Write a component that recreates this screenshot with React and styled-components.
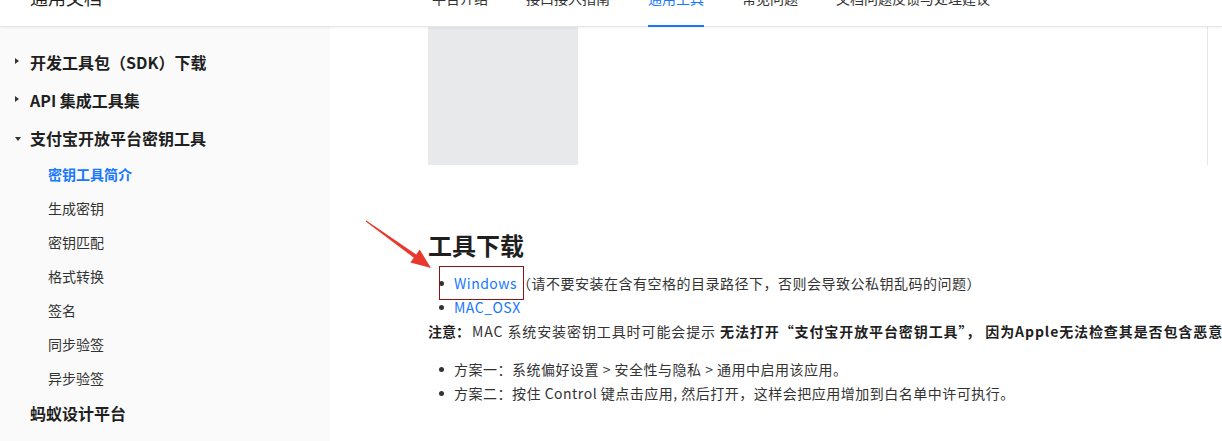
import React from 'react';
import styled, { createGlobalStyle } from 'styled-components';

const GlobalStyle = createGlobalStyle`
  html, body {
    margin: 0;
    padding: 0;
    overflow: hidden;
    background: #ffffff;
  }
  body {
    font-family: "Noto Sans CJK SC", "Noto Sans", sans-serif;
    color: #333333;
  }
`;

const navItems = ['平台介绍', '接口接入指南', '通用工具', '常见问题', '文档问题反馈与处理建议'];

const sideGroups = [
  { title: '开发工具包（SDK）下载', open: false },
  { title: 'API 集成工具集', open: false },
  {
    title: '支付宝开放平台密钥工具',
    open: true,
    children: ['密钥工具简介', '生成密钥', '密钥匹配', '格式转换', '签名', '同步验签', '异步验签'],
    active: '密钥工具简介',
  },
];

const App = () => {
  return (
    <Page>
      <GlobalStyle />
      <Header>
        <Logo>通用文档</Logo>
        <Nav>
          {navItems.map((item) => (
            <NavItem key={item} $active={item === '通用工具'}>
              {item}
            </NavItem>
          ))}
        </Nav>
      </Header>

      <Body>
        <Sidebar>
          {sideGroups.map((group) => (
            <div key={group.title}>
              <GroupTitle>
                <Caret $open={group.open} />
                {group.title}
              </GroupTitle>
              {group.open && (
                <SubList>
                  {group.children.map((child) => (
                    <SubItem key={child} $active={child === group.active}>
                      {child}
                    </SubItem>
                  ))}
                </SubList>
              )}
            </div>
          ))}
          <GroupTitle $plain>蚂蚁设计平台</GroupTitle>
        </Sidebar>

        <Main>
          <ImageRow>
            <Placeholder />
            <FrameEdge />
          </ImageRow>

          <Heading>工具下载</Heading>

          <List>
            <ListItem>
              <Bullet />
              <MarkedLink>Windows</MarkedLink>
              <span>（请不要安装在含有空格的目录路径下，否则会导致公私钥乱码的问题）</span>
            </ListItem>
            <ListItem>
              <Bullet />
              <Link>MAC_OSX</Link>
            </ListItem>
          </List>

          <Note>
            <Lead>注意：</Lead>MAC 系统安装密钥工具时可能会提示{' '}
            <strong>无法打开“支付宝开放平台密钥工具”， 因为Apple无法检查其是否包含恶意软件。</strong>
          </Note>

          <List $spaced>
            <ListItem>
              <Bullet />
              <span>方案一：系统偏好设置 &gt; 安全性与隐私 &gt; 通用中启用该应用。</span>
            </ListItem>
            <ListItem>
              <Bullet />
              <span>方案二：按住 Control 键点击应用, 然后打开，这样会把应用增加到白名单中许可执行。</span>
            </ListItem>
          </List>
        </Main>
      </Body>

      <Arrow width="80" height="60" viewBox="0 0 80 60">
        <polygon
          points="5.7,6.4 53.8,42.7 50.3,47.6 71,53 59.7,34.6 56.2,39.5 6.3,5.6"
          fill="#e8392e"
        />
      </Arrow>
    </Page>
  );
};

export default App;

const Page = styled.div`
  position: relative;
  height: 100vh;
  overflow: hidden;
`;

const Header = styled.header`
  position: relative;
  z-index: 2;
  display: flex;
  align-items: center;
  height: 60px;
  margin-top: -33px;
  background: #ffffff;
  border-bottom: 1px solid #e6e6e6;
  box-shadow: 0 1px 3px rgba(0, 0, 0, 0.06);
  box-sizing: border-box;
`;

const Logo = styled.div`
  width: 402px;
  padding-left: 30px;
  box-sizing: border-box;
  font-size: 18px;
  line-height: 24px;
  color: #1f1f1f;
`;

const Nav = styled.nav`
  display: flex;
  align-items: stretch;
  gap: 38px;
  height: 100%;
  margin-left: 30px;
`;

const NavItem = styled.div`
  display: flex;
  align-items: center;
  padding-top: 3px;
  font-size: 14px;
  color: ${(p) => (p.$active ? '#1677ff' : '#333333')};
  border-bottom: 2px solid ${(p) => (p.$active ? '#1677ff' : 'transparent')};
  margin-bottom: -1px;
  box-sizing: border-box;
`;

const Body = styled.div`
  display: flex;
  height: calc(100vh - 27px);
`;

const Sidebar = styled.aside`
  flex: 0 0 330px;
  padding-top: 16px;
  background: #fafafa;
  box-sizing: border-box;
`;

const GroupTitle = styled.div`
  position: relative;
  display: flex;
  align-items: center;
  height: 38px;
  padding-left: 30px;
  font-size: 16px;
  font-weight: 700;
  color: #1f1f1f;
  margin-top: ${(p) => (p.$plain ? '-1px' : '0')};
`;

const Caret = styled.span`
  position: absolute;
  left: 15px;
  top: 50%;
  width: 0;
  height: 0;
  ${(p) =>
    p.$open
      ? `
    margin-top: -1px;
    border-left: 3.5px solid transparent;
    border-right: 3.5px solid transparent;
    border-top: 4px solid #333;
  `
      : `
    margin-top: -4px;
    border-top: 3.5px solid transparent;
    border-bottom: 3.5px solid transparent;
    border-left: 4px solid #333;
  `}
`;

const SubList = styled.div`
  display: flex;
  flex-direction: column;
`;

const SubItem = styled.div`
  display: flex;
  align-items: center;
  height: 34px;
  padding-left: 48px;
  font-size: 14px;
  font-weight: ${(p) => (p.$active ? 700 : 400)};
  color: ${(p) => (p.$active ? '#1677ff' : '#333333')};
`;

const Main = styled.main`
  flex: 1;
  min-width: 0;
  padding-left: 98px;
  overflow: hidden;
  font-size: 14px;
  letter-spacing: 0.5px;
  color: #333333;
`;

const ImageRow = styled.div`
  display: flex;
  height: 138px;
`;

const Placeholder = styled.div`
  flex: 0 0 150px;
  height: 100%;
  background: #e8e9eb;
`;

const FrameEdge = styled.div`
  flex: 0 0 40px;
  margin-left: 629px;
  height: 100%;
  border-left: 1px solid #e6e6e6;
`;

const Heading = styled.h2`
  margin: 62px 0 0;
  font-size: 24px;
  line-height: 36px;
  font-weight: 700;
  letter-spacing: 0;
  color: #1f1f1f;
`;

const List = styled.ul`
  margin: ${(p) => (p.$spaced ? '14px' : '8px')} 0 0;
  padding: 0;
  list-style: none;
`;

const ListItem = styled.li`
  display: flex;
  align-items: center;
  height: 24px;
  white-space: nowrap;
`;

const Bullet = styled.span`
  flex: 0 0 auto;
  width: 5px;
  height: 5px;
  margin: 0 10px 0 11px;
  border-radius: 50%;
  background: #333333;
`;

const Link = styled.span`
  color: #1677ff;
`;

const MarkedLink = styled(Link)`
  position: relative;
  &::after {
    content: '';
    position: absolute;
    left: -15px;
    right: -7px;
    top: -7px;
    bottom: -7px;
    border: 1px solid #8b1414;
  }
`;

const Note = styled.p`
  margin: 0;
  line-height: 24px;
  white-space: nowrap;
  letter-spacing: 0.9px;
  & strong {
    font-weight: 700;
    color: #1f1f1f;
  }
`;

const Lead = styled.strong`
  margin-right: 2px;
  letter-spacing: 0;
`;

const Arrow = styled.svg`
  position: absolute;
  left: 360px;
  top: 215px;
  pointer-events: none;
`;
